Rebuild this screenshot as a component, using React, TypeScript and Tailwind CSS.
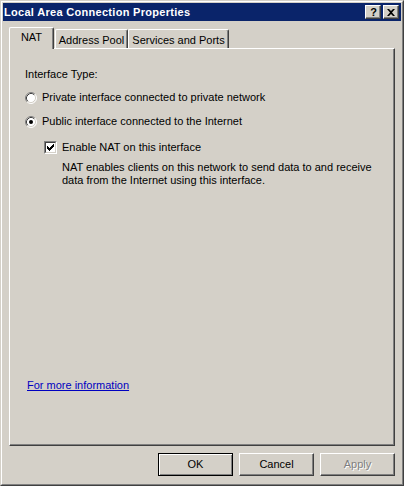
import React from 'react'

function Radio({ checked }: { checked?: boolean }) {
  return (
    <svg width="12" height="12" viewBox="0 0 12 12" className="shrink-0">
      <circle cx="6" cy="6" r="5" fill="#ffffff" />
      <path d="M2.11 9.89 A5.5 5.5 0 0 1 9.89 2.11" fill="none" stroke="#808080" />
      <path d="M9.89 2.11 A5.5 5.5 0 0 1 2.11 9.89" fill="none" stroke="#ffffff" />
      <path d="M2.82 9.18 A4.5 4.5 0 0 1 9.18 2.82" fill="none" stroke="#404040" />
      <path d="M9.18 2.82 A4.5 4.5 0 0 1 2.82 9.18" fill="none" stroke="#d4d0c8" />
      {checked && <circle cx="6" cy="6" r="2" fill="#000000" />}
    </svg>
  )
}

function CheckBox({ checked }: { checked?: boolean }) {
  return (
    <div className="w-[13px] h-[13px] shrink-0 border border-t-[#808080] border-l-[#808080] border-r-white border-b-white">
      <div className="w-full h-full bg-white border border-t-[#404040] border-l-[#404040] border-r-[#d4d0c8] border-b-[#d4d0c8]">
        {checked && (
          <svg width="9" height="9" viewBox="0 0 9 9" className="block">
            <rect x="1" y="3" width="1" height="3" fill="#000" />
            <rect x="2" y="4" width="1" height="3" fill="#000" />
            <rect x="3" y="5" width="1" height="3" fill="#000" />
            <rect x="4" y="4" width="1" height="3" fill="#000" />
            <rect x="5" y="3" width="1" height="3" fill="#000" />
            <rect x="6" y="2" width="1" height="3" fill="#000" />
            <rect x="7" y="1" width="1" height="3" fill="#000" />
          </svg>
        )}
      </div>
    </div>
  )
}

function TitleButton({ children }: { children: React.ReactNode }) {
  return (
    <div className="w-[16px] h-[14px] bg-[#d4d0c8] border border-t-white border-l-white border-r-[#404040] border-b-[#404040] shadow-[inset_-1px_-1px_0_#808080] flex items-center justify-center text-black">
      {children}
    </div>
  )
}

export default function App() {
  return (
    <div className="w-[404px] h-[486px] font-['Liberation_Sans',Arial,sans-serif] text-[11px] leading-[13px] text-black border border-t-[#d4d0c8] border-l-[#d4d0c8] border-r-[#404040] border-b-[#404040]">
      <div className="h-full bg-[#d4d0c8] p-px border border-t-white border-l-white border-r-[#808080] border-b-[#808080]">
        {/* title bar */}
        <div className="h-[18px] bg-[#0a246a] flex items-center justify-between pl-[1px] pr-[2px]">
          <span className="text-white font-bold tracking-[0.3px] text-[11px]">Local Area Connection Properties</span>
          <div className="flex gap-[2px]">
            <TitleButton>
              <span className="font-bold text-[11px] leading-[11px] pl-px">?</span>
            </TitleButton>
            <TitleButton>
              <svg width="8" height="7" viewBox="0 0 8 7">
                <path d="M0 0h2l2 2 2-2h2L5 3.5 8 7H6L4 5 2 7H0l3-3.5z" fill="#000" />
              </svg>
            </TitleButton>
          </div>
        </div>

        <div className="px-[6px] pt-[6px]">
          {/* tabs */}
          <div className="flex items-end h-[21px]">
            <div className="relative z-10 -mb-px w-[45px] h-[22px] bg-[#d4d0c8] border-l border-t border-r border-l-white border-t-white border-r-[#404040] shadow-[inset_-1px_0_0_#808080] rounded-tl-[2px] rounded-tr-[2px] flex justify-center pt-[3px]">
              NAT
            </div>
            <div className="ml-px w-[73px] h-[19px] border-l border-t border-r border-l-white border-t-white border-r-[#404040] shadow-[inset_-1px_0_0_#808080] rounded-tl-[2px] rounded-tr-[2px] flex justify-center pt-[4px]">
              Address Pool
            </div>
            <div className="w-[101px] h-[19px] border-l border-t border-r border-l-white border-t-white border-r-[#404040] shadow-[inset_-1px_0_0_#808080] rounded-tl-[2px] rounded-tr-[2px] flex justify-center pt-[4px]">
              Services and Ports
            </div>
          </div>

          {/* panel */}
          <div className="w-[386px] h-[398px] border border-t-white border-l-white border-r-[#404040] border-b-[#404040] shadow-[inset_-1px_-1px_0_#808080] pl-[15px] pt-[19px] flex flex-col">
            <div>Interface Type:</div>
            <div className="mt-[10px] h-[13px] flex items-center gap-[5px]">
              <Radio />
              <span>Private interface connected to private network</span>
            </div>
            <div className="mt-[11px] h-[13px] flex items-center gap-[5px]">
              <Radio checked />
              <span>Public interface connected to the Internet</span>
            </div>
            <div className="mt-[13px] ml-[19px] h-[13px] flex items-center gap-[5px]">
              <CheckBox checked />
              <span>Enable NAT on this interface</span>
            </div>
            <div className="mt-[7px] ml-[37px]">
              <div>NAT enables clients on this network to send data to and receive</div>
              <div>data from the Internet using this interface.</div>
            </div>
            <div className="mt-[192px] ml-[2px]">
              <span className="text-[#0000c0] underline">For more information</span>
            </div>
          </div>
        </div>

        {/* buttons */}
        <div className="mt-[7px] pr-[6px] flex justify-end gap-[6px]">
          <div className="w-[75px] h-[23px] border border-black shadow-[inset_1px_1px_0_#fff,inset_-1px_-1px_0_#808080] flex items-center justify-center">
            OK
          </div>
          <div className="w-[75px] h-[23px] border border-t-white border-l-white border-r-[#404040] border-b-[#404040] shadow-[inset_-1px_-1px_0_#808080] flex items-center justify-center">
            Cancel
          </div>
          <div className="w-[75px] h-[23px] border border-t-white border-l-white border-r-[#404040] border-b-[#404040] shadow-[inset_-1px_-1px_0_#808080] flex items-center justify-center text-[#808080] [text-shadow:1px_1px_0_#fff]">
            Apply
          </div>
        </div>
      </div>
    </div>
  )
}
